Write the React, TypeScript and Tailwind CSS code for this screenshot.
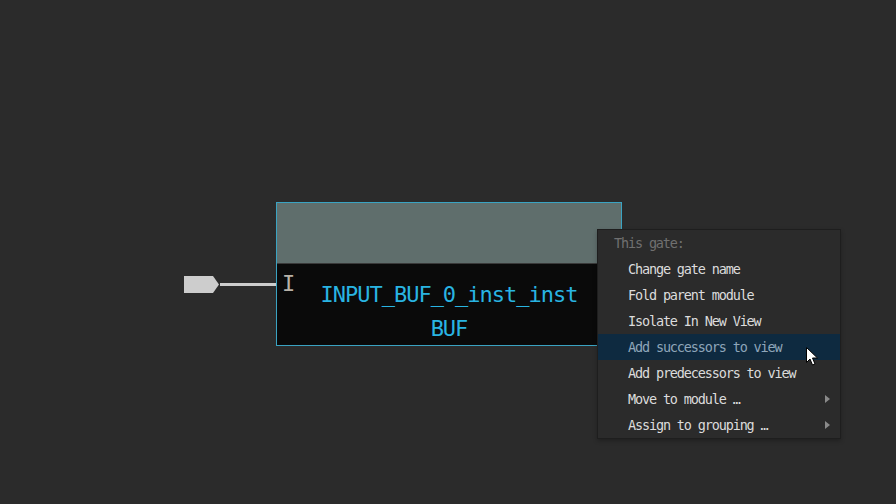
import React from "react";

const mono = { fontFamily: '"DejaVu Sans Mono", "Liberation Mono", monospace' };

function Arrow() {
  return (
    <svg width="5" height="8" viewBox="0 0 5 8" className="block">
      <polygon points="0,0 5,4 0,8" fill="#8a8a8a" />
    </svg>
  );
}

function Item({ label, active, sub }: { label: string; active?: boolean; sub?: boolean }) {
  return (
    <div
      className={`flex h-[26px] items-center justify-between pl-[30px] pr-[10px] text-[13.5px] tracking-[-1.15px] ${
        active ? "bg-[#0e2a40] text-[#8ea6ba]" : "text-[#dcdcdc]"
      }`}
    >
      <span>{label}</span>
      {sub ? <Arrow /> : null}
    </div>
  );
}

export default function App() {
  return (
    <div className="relative h-[504px] w-[896px] overflow-hidden bg-[#2b2b2b]" style={mono}>
      {/* input pin */}
      <div className="absolute left-[184px] top-[276px] flex items-center">
        <svg width="36" height="17" viewBox="0 0 36 17" className="block">
          <polygon points="0,0 29,0 35,8.5 29,17 0,17" fill="#cdcdcd" />
        </svg>
        <div className="h-[3px] w-[57px] bg-[#cdcdcd]" />
      </div>

      {/* gate */}
      <div className="absolute left-[276px] top-[202px] flex h-[144px] w-[346px] flex-col overflow-hidden border border-[#3aa3c2]">
        <div className="h-[60px] shrink-0 bg-[#5f6e6c]" />
        <div className="h-[1px] shrink-0 bg-[#3a3a3a]" />
        <div className="relative flex min-h-0 flex-1 flex-col items-center bg-[#0a0a0a] pt-[14px]">
          <span className="absolute left-[5px] top-[9px] text-[22px] leading-none text-[#b8b2a8]">I</span>
          <div className="text-[22px] leading-[34px] tracking-[-1px] text-[#29b4e2]">INPUT_BUF_0_inst_inst</div>
          <div className="text-[22px] leading-[34px] tracking-[-1px] text-[#29b4e2]">BUF</div>
        </div>
      </div>

      {/* context menu */}
      <div className="absolute left-[597px] top-[229px] flex w-[244px] flex-col border border-[#1e1e1e] bg-[#2b2b2b] shadow-[0_2px_4px_rgba(0,0,0,0.25)]">
        <div className="flex h-[26px] items-center pl-[16px] text-[13.5px] tracking-[-1.15px] text-[#707070]">This gate:</div>
        <Item label="Change gate name" />
        <Item label="Fold parent module" />
        <Item label="Isolate In New View" />
        <Item label="Add successors to view" active />
        <Item label="Add predecessors to view" />
        <Item label="Move to module …" sub />
        <Item label="Assign to grouping …" sub />
      </div>

      {/* mouse cursor */}
      <svg width="14" height="20" viewBox="0 0 14 20" className="absolute left-[806px] top-[347px]">
        <path d="M0.5,0.5 L0.5,15.5 L4,12 L6.5,18 L9,17 L6.5,11 L11.5,11 Z" fill="#ffffff" stroke="#000000" strokeWidth="1" strokeLinejoin="round" />
      </svg>
    </div>
  );
}
